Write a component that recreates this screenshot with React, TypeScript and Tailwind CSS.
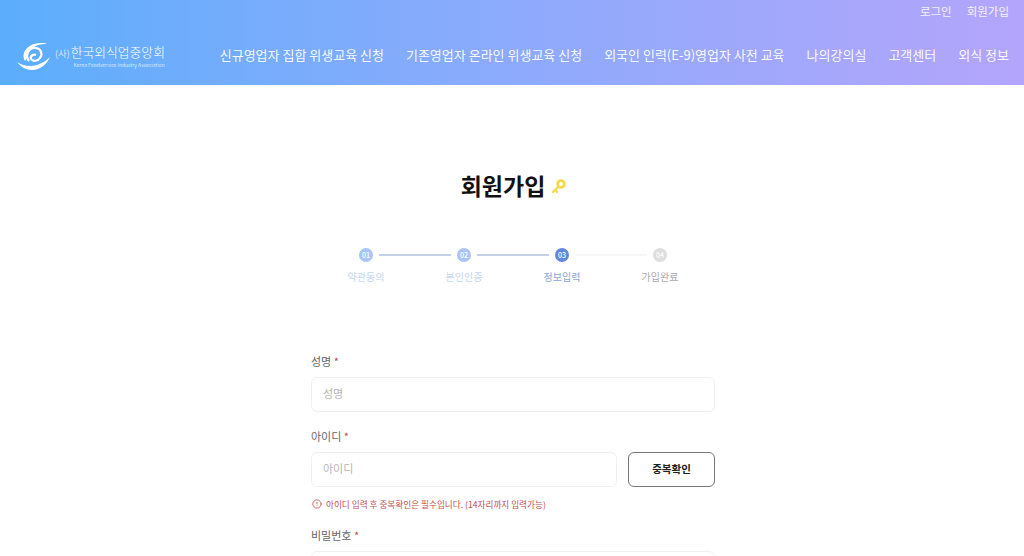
import { CircleAlert } from "lucide-react";

const font = { fontFamily: '"Noto Sans CJK KR", "Noto Sans", sans-serif' };

const menus = [
  "신규영업자 집합 위생교육 신청",
  "기존영업자 온라인 위생교육 신청",
  "외국인 인력(E-9)영업자 사전 교육",
  "나의강의실",
  "고객센터",
  "외식 정보",
];

const steps = [
  { no: "01", label: "약관동의", circle: "bg-[#a9c4f5]", text: "text-[#c5d6f3]", line: "bg-[#c3d0e8]" },
  { no: "02", label: "본인인증", circle: "bg-[#a9c4f5]", text: "text-[#c5d6f3]", line: "bg-[#c3d0e8]" },
  { no: "03", label: "정보입력", circle: "bg-[#6388e0]", text: "text-[#8ba6da]", line: "bg-[#f7f7f8]" },
  { no: "04", label: "가입완료", circle: "bg-[#dedede]", text: "text-[#a8a8a8]", line: "" },
];

function Logo() {
  return (
    <div className="flex items-center gap-[5px] text-white">
      <svg width="33" height="28" viewBox="0 0 33 28" fill="none" stroke="white" className="mt-[1px]">
        <path d="M8 19C3 10 12 0 26 1c2 0 3 .5 4 1C20 1 10 7 10 16Z" fill="white" stroke="none" />
        <path d="M12 19C8 14 11 6 18 6c6 0 8 6 5 10-2 3-7 4-9 1-1-3 2-5 5-4" strokeWidth="2.2" />
        <path d="M0 20c6 4 13 5 20 3 6-2 10-5 13-8-3 7-10 13-18 13-6 0-11-3-15-8Z" fill="white" stroke="none" />
      </svg>
      <div className="mt-[1px] flex flex-col items-end">
        <div className="flex items-baseline text-[12.8px] leading-[18px] font-light whitespace-nowrap">
          <span className="mr-[1px] text-[9.5px]">(사)</span>한국외식업중앙회
        </div>
        <div className="text-[5px] leading-[6px] whitespace-nowrap opacity-70">Korea Foodservice Industry Association</div>
      </div>
    </div>
  );
}

function Label({ text }: { text: string }) {
  return (
    <div className="text-[11px] leading-[16px] text-[#666]">
      {text} <span className="text-[#c0504d]">*</span>
    </div>
  );
}

export default function App() {
  return (
    <div className="h-[556px] overflow-hidden bg-white" style={font}>
      <header className="h-[85px] bg-gradient-to-r from-[#5aaefc] to-[#b3a5fb] pl-[17px] pr-[15px] text-white">
        <div className="flex h-[23px] items-center justify-end gap-[15px] text-[11.5px] text-white/85">
          <span>로그인</span>
          <span>회원가입</span>
        </div>
        <div className="flex h-[64px] items-center justify-between">
          <Logo />
          <nav className="flex gap-[22px] text-[13px] whitespace-nowrap text-white/95">
            {menus.map((m) => (
              <span key={m}>{m}</span>
            ))}
          </nav>
        </div>
      </header>

      <h1 className="mt-[83px] ml-[3px] flex items-center justify-center gap-[6px] text-[23px] leading-[34px] font-bold text-[#111]">
        회원가입
        <svg width="15" height="15" viewBox="0 0 15 15" className="mt-[2px]">
          <circle cx="10" cy="5" r="3.4" fill="none" stroke="#f5d94e" strokeWidth="2.8" />
          <path d="M7.5 7.5 2 13M4 11l1.8 1.8" stroke="#f5d94e" strokeWidth="2.4" strokeLinecap="round" />
        </svg>
      </h1>

      <div className="mt-[46px] ml-[359px] flex">
        {steps.map((s) => (
          <div key={s.no} className="w-[98px]">
            <div className="flex items-center">
              <div className={`flex h-[14px] w-[14px] shrink-0 items-center justify-center rounded-full text-[7px] font-medium text-white ${s.circle}`}>
                {s.no}
              </div>
              {s.line && <div className={`ml-[6px] h-[2px] w-[72px] ${s.line}`} />}
            </div>
            <div className={`mt-[7px] ml-[-30px] w-[74px] text-center text-[10px] leading-[16px] ${s.text}`}>{s.label}</div>
          </div>
        ))}
      </div>

      <form className="mt-[68px] ml-[311px] w-[404px]">
        <Label text="성명" />
        <div className="mt-[8px] flex h-[35px] items-center rounded-[6px] border border-[#eff0f2] px-[11px] pb-[2px] text-[11px] text-[#b5b5b5]">
          성명
        </div>
        <div className="mt-[16px]">
          <Label text="아이디" />
          <div className="mt-[8px] flex gap-[11px]">
            <div className="flex h-[35px] flex-1 items-center rounded-[6px] border border-[#eff0f2] px-[11px] pb-[2px] text-[11px] text-[#b5b5b5]">
              아이디
            </div>
            <button type="button" className="h-[35px] w-[87px] rounded-[6px] border border-[#777] pb-[2px] text-[10.5px] font-bold text-[#222]">
              중복확인
            </button>
          </div>
          <div className="mt-[10px] ml-[1px] flex items-center gap-[4px] text-[8.65px] leading-[14px] text-[#c0504d]">
            <CircleAlert size={10} />
            아이디 입력 후 중복확인은 필수입니다. (14자리까지 입력가능)
          </div>
        </div>
        <div className="mt-[16px]">
          <Label text="비밀번호" />
          <div className="mt-[8px] h-[35px] rounded-[6px] border border-[#eff0f2]" />
        </div>
      </form>
    </div>
  );
}
